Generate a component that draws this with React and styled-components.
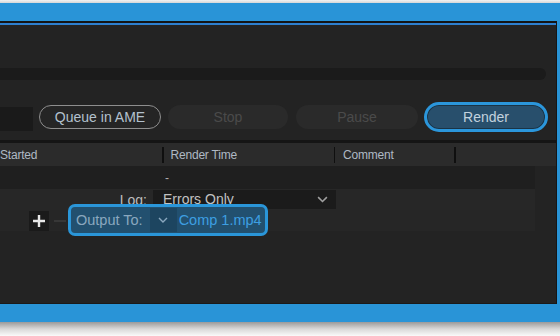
import React from "react";
import styled, { createGlobalStyle } from "styled-components";

const Global = createGlobalStyle`
  html, body { margin: 0; padding: 0; background: #fff; }
  body { font-family: "Liberation Sans", Arial, sans-serif; }
`;

const Page = styled.div`
  width: 560px;
  height: 336px;
  display: flex;
  flex-direction: column;
  overflow: hidden;
  background: #fff;
`;

const TopStrip = styled.div`
  height: 3px;
  background: linear-gradient(#f2f2f2, #d6d6d6);
`;

const Frame = styled.div`
  background: #2994d7;
  padding: 18px 3px 18px 0;
`;

const BottomShade = styled.div`
  flex: 1;
  background: linear-gradient(#9a9a9a, #d8d8d8 50%, #fafafa);
`;

const Panel = styled.div`
  height: 283px;
  box-sizing: border-box;
  background: #232323;
  border-top: 2px solid #141414;
  border-right: 1px solid #161616;
  border-bottom: 1px solid #1a1a1a;
  box-shadow: inset 0 2px 0 #2d7fcf;
  display: flex;
  flex-direction: column;
`;

const ProgressTrack = styled.div`
  margin-top: 45px;
  width: 546px;
  height: 12px;
  border-radius: 0 6px 6px 0;
  background: #1b1b1b;
`;

const Toolbar = styled.div`
  margin-top: 22px;
  height: 30px;
  display: flex;
  align-items: center;
`;

const FieldStub = styled.div`
  width: 33px;
  height: 24px;
  margin-top: 4px;
  background: #1a1a1a;
`;

const PillButton = styled.div`
  box-sizing: border-box;
  width: ${(p) => p.$w}px;
  height: ${(p) => p.$h || 24}px;
  margin-left: ${(p) => p.$gap}px;
  border-radius: 15px;
  display: flex;
  align-items: center;
  justify-content: center;
  font-size: 14px;
  ${(p) =>
    p.$variant === "outline" &&
    `
    border: 1.5px solid #8e8e8e;
    color: #b3c1ce;
    background: #252525;
  `}
  ${(p) =>
    p.$variant === "disabled" &&
    `
    background: #2a2a2a;
    color: #4a4a4a;
  `}
  ${(p) =>
    p.$variant === "primary" &&
    `
    border: 3px solid #2b96db;
    background: #284f6c;
    box-shadow: inset 0 0 0 1px #1a3446;
    color: #c3d2de;
  `}
`;

const HeaderRow = styled.div`
  margin-top: 8px;
  height: 23px;
  border-top: 3px solid #151515;
  background: #2b2b2b;
  display: flex;
  align-items: center;
`;

const HeaderCell = styled.div`
  width: ${(p) => p.$w}px;
  height: 100%;
  display: flex;
  align-items: center;
  padding-left: ${(p) => p.$pl || 0}px;
  box-sizing: border-box;
  font-size: 12px;
  letter-spacing: -0.2px;
  color: #afb9c4;
`;

const Bar = styled.div`
  width: 1.5px;
  height: 16px;
  background: #0f0f0f;
`;

const Rows = styled.div`
  width: 535px;
  display: flex;
  flex-direction: column;
`;

const Row = styled.div`
  height: ${(p) => p.$h}px;
  background: ${(p) => p.$bg};
  display: flex;
  align-items: center;
  padding-left: ${(p) => p.$pl || 0}px;
  box-sizing: border-box;
`;

const Dash = styled.span`
  font-size: 12px;
  color: #b0b0b0;
`;

const FieldLabel = styled.span`
  width: 147px;
  text-align: right;
  font-size: 14px;
  color: #bdbdbd;
`;

const Select = styled.div`
  margin-left: 6px;
  width: 183px;
  height: 19px;
  background: #1b1b1b;
  display: flex;
  align-items: center;
  justify-content: space-between;
  padding: 0 8px 0 10px;
  box-sizing: border-box;
  font-size: 14px;
  color: #c2c2c2;
  overflow: hidden;
  line-height: 19px;
`;

const SquareButton = styled.div`
  width: 20px;
  height: 20px;
  margin-right: 1px;
  display: flex;
  align-items: center;
  justify-content: center;
  background: ${(p) => p.$bg};
`;

const Highlight = styled.div`
  position: relative;
  z-index: 1;
  margin: -6px 0 -5px -3px;
  height: 32px;
  box-sizing: border-box;
  border: 3px solid #2a96d9;
  border-radius: 7px;
  background: #22506f;
  display: flex;
  align-items: center;
  padding: 0 3px 0 5px;
`;

const OutputLabel = styled.span`
  font-size: 14.5px;
  color: #8aa8bf;
`;

const ChevronBox = styled.div`
  margin-left: 7px;
  width: 27px;
  height: 24px;
  background: #1d4560;
  display: flex;
  align-items: center;
  justify-content: center;
`;

const FileLink = styled.span`
  margin-left: 2px;
  font-size: 14.5px;
  color: #3d9fe2;
`;

const Chevron = ({ color, w = 10 }) => (
  <svg width={w} height={w * 0.6} viewBox="0 0 10 6">
    <path d="M1 1 L5 5 L9 1" fill="none" stroke={color} strokeWidth="1.4" />
  </svg>
);

const Plus = () => (
  <svg width="14" height="14" viewBox="0 0 14 14">
    <path d="M7 1 V13 M1 7 H13" stroke="#e8e8e8" strokeWidth="2.4" />
  </svg>
);

const Minus = () => (
  <svg width="14" height="14" viewBox="0 0 14 14">
    <path d="M1 7 H13" stroke="#3e3e3e" strokeWidth="1.5" />
  </svg>
);

export default function App() {
  return (
    <Page>
      <Global />
      <TopStrip />
      <Frame>
        <Panel>
          <ProgressTrack />
          <Toolbar>
            <FieldStub />
            <PillButton $variant="outline" $w={122} $gap={6}>
              Queue in AME
            </PillButton>
            <PillButton $variant="disabled" $w={120} $gap={7}>
              Stop
            </PillButton>
            <PillButton $variant="disabled" $w={122} $gap={8}>
              Pause
            </PillButton>
            <PillButton $variant="primary" $w={124} $h={30} $gap={6}>
              Render
            </PillButton>
          </Toolbar>
          <HeaderRow>
            <HeaderCell $w={162}>Started</HeaderCell>
            <Bar />
            <HeaderCell $w={170} $pl={7}>
              Render Time
            </HeaderCell>
            <Bar />
            <HeaderCell $w={119} $pl={8}>
              Comment
            </HeaderCell>
            <Bar />
          </HeaderRow>
          <Rows>
            <Row $h={23} $bg="#1f1f1f" $pl={165}>
              <Dash>-</Dash>
            </Row>
            <Row $h={21} $bg="#272727">
              <FieldLabel>Log:</FieldLabel>
              <Select>
                Errors Only
                <Chevron color="#a0a0a0" w={11} />
              </Select>
            </Row>
            <Row $h={21} $bg="#262626" $pl={29}>
              <SquareButton $bg="#1a1a1a">
                <Plus />
              </SquareButton>
              <SquareButton $bg="#262626">
                <Minus />
              </SquareButton>
              <Highlight>
                <OutputLabel>Output To:</OutputLabel>
                <ChevronBox>
                  <Chevron color="#8aa8bf" w={10} />
                </ChevronBox>
                <FileLink>Comp 1.mp4</FileLink>
              </Highlight>
            </Row>
          </Rows>
        </Panel>
      </Frame>
      <BottomShade />
    </Page>
  );
}
